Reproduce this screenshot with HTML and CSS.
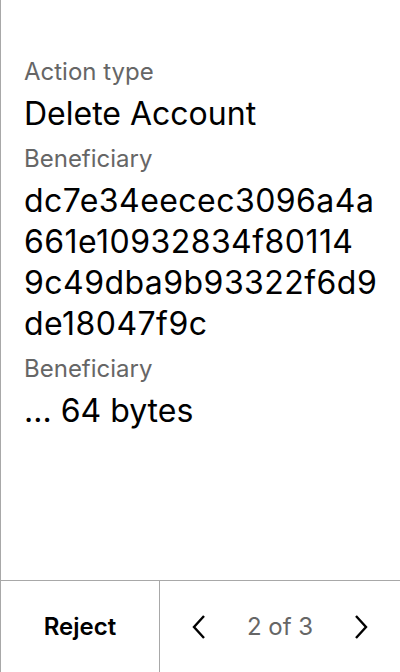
FILE: index.html
```html
<!DOCTYPE html>
<html>
<head>
<meta charset="utf-8">
<link rel="stylesheet" href="styles.css">
</head>
<body>
<div class="screen">
  <main class="content">
    <div class="label">Action type</div>
    <div class="value">Delete Account</div>
    <div class="label">Beneficiary</div>
    <div class="value hash"><span class="chunk">dc7e34eecec3096a4a</span><span class="chunk">661e10932834f80114</span><span class="chunk">9c49dba9b93322f6d9</span><span class="chunk">de18047f9c</span></div>
    <div class="label">Beneficiary</div>
    <div class="value">... 64 bytes</div>
  </main>
  <footer class="footer">
    <div class="reject">Reject</div>
    <div class="pager">
      <svg class="chev" width="14" height="24" viewBox="0 0 14 24"><path d="M12 1 L2 12 L12 23" fill="none" stroke="#000" stroke-width="2.4"/></svg>
      <span class="count">2 of 3</span>
      <svg class="chev" width="14" height="24" viewBox="0 0 14 24"><path d="M2 1 L12 12 L2 23" fill="none" stroke="#000" stroke-width="2.4"/></svg>
    </div>
  </footer>
</div>
</body>
</html>
```
FILE: styles.css
```css
* { box-sizing: border-box; }
html, body { margin: 0; padding: 0; background: #fff; }
body { font-family: Inter, "Noto Sans", sans-serif; color: #000; }
.screen {
  width: 400px;
  height: 672px;
  border-left: 1px solid #a8a8a8;
  display: flex;
  flex-direction: column;
}
.content {
  flex: 1;
  padding: 56px 16px 0 23px;
}
.label {
  font-size: 24px;
  line-height: 32px;
  color: #666;
  margin-bottom: 5px;
}
.value {
  font-size: 32px;
  line-height: 41px;
  margin-bottom: 9px;
}
.hash { letter-spacing: 0.45px; }
.chunk { display: block; white-space: nowrap; }
.footer {
  height: 92px;
  border-top: 1px solid #a8a8a8;
  display: flex;
}
.reject {
  width: 159px;
  border-right: 1px solid #a8a8a8;
  display: flex;
  align-items: center;
  justify-content: center;
  font-size: 24px;
  font-weight: 600;
}
.pager {
  flex: 1;
  display: flex;
  align-items: center;
  justify-content: space-between;
  padding: 0 32px 0 32px;
}
.count {
  font-size: 24px;
  color: #666;
}
.chev { display: block; }
```
